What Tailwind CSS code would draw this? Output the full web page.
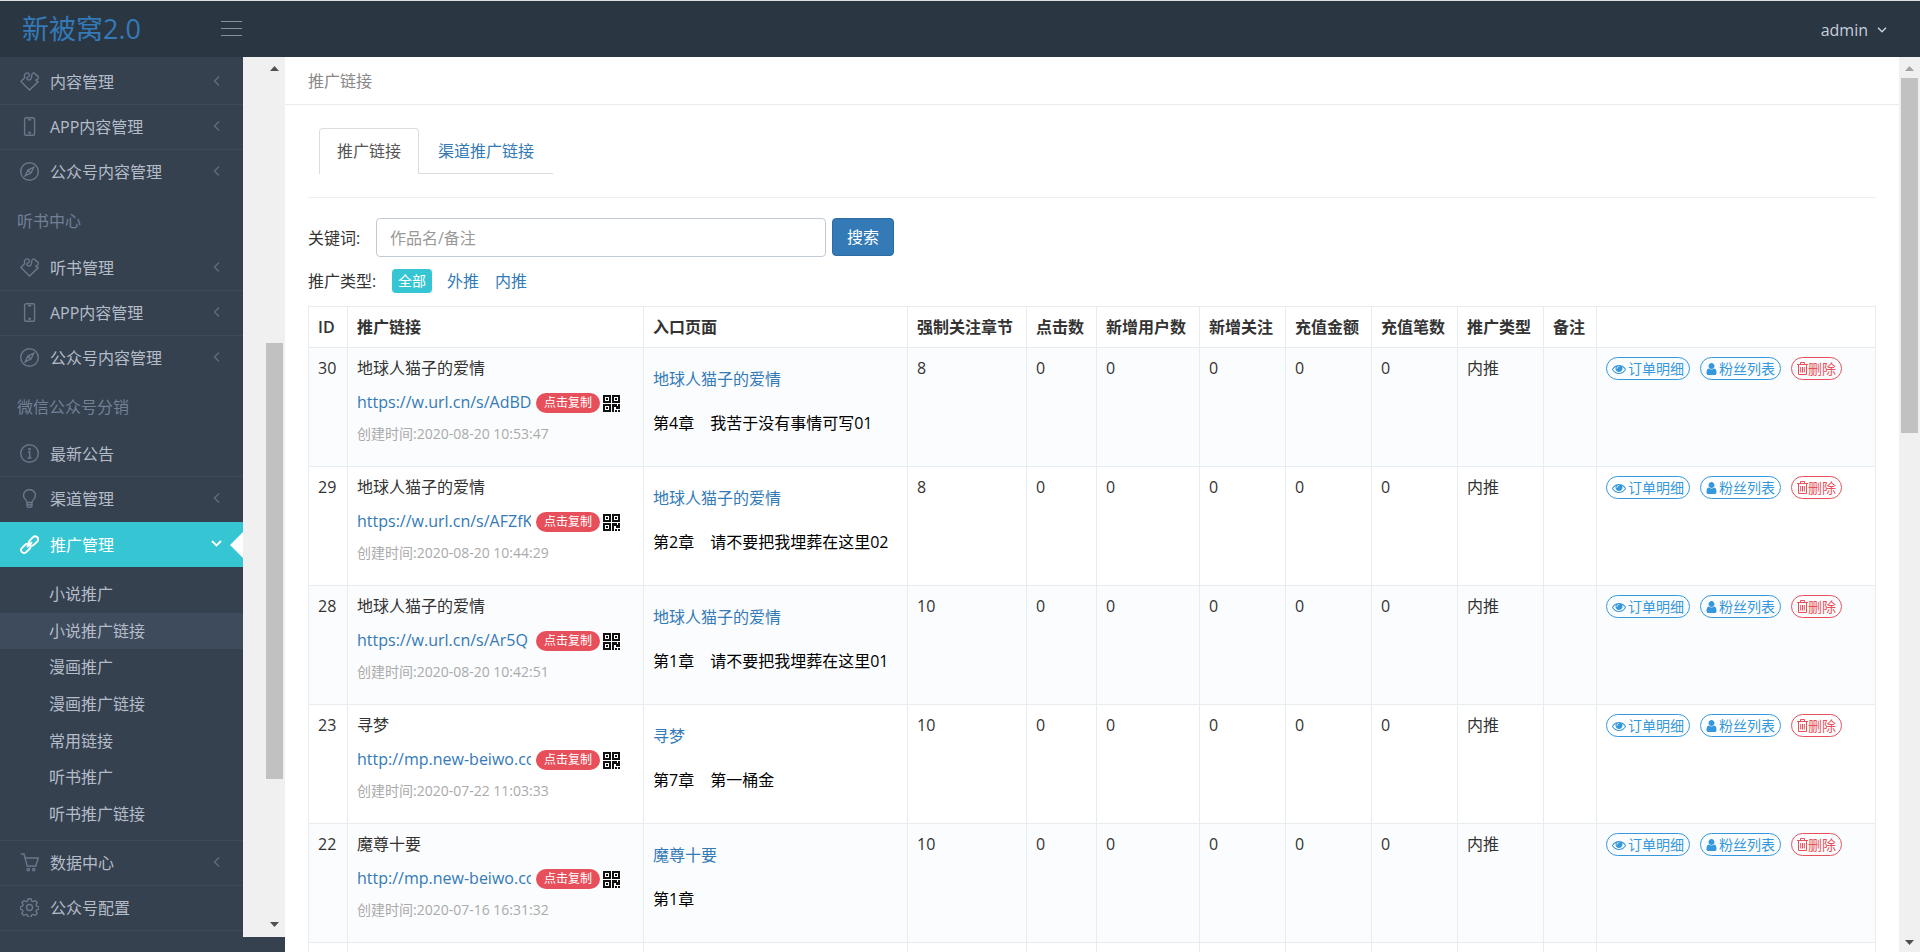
<!DOCTYPE html>
<html lang="zh-CN">
<head>
<meta charset="utf-8">
<title>新被窝2.0</title>
<script src="https://cdn.jsdelivr.net/npm/@tailwindcss/browser@4"></script>
</head>
<body class="flex h-screen flex-col overflow-hidden bg-[#364150] font-['Open_Sans','Noto_Sans_CJK_SC',sans-serif] text-base leading-6 text-[#333]">

<svg class="hidden" xmlns="http://www.w3.org/2000/svg">
  <symbol id="puzzle" viewBox="0 0 19 19"><path d="M.9 9.500 4.800 5.600C4 3.500 4.800 1.200 6.800.9C8.600.7 9.800 2 9.300 3.800C8.900 5 6.800 4.800 6.900 6.300C7.100 8 9.300 8.600 10.600 7.400C12 6.200 11.600 5 11.800 3C12 1 14 .4 15.100 1.600C15.600 2.200 15.500 3 16 3.300C18 3.100 18.700 5.200 17.900 6.800C17.300 7.800 15.900 7.600 15.700 8.300L18.100 9.800 9.500 18.100Z"/></symbol>
  <symbol id="phone" viewBox="0 0 19 19"><rect x="4.600" y=".7" width="10" height="17.500" rx="1.500"/><path d="M8 2.700h3.200M9 15.500h1.200v.6H9z"/></symbol>
  <symbol id="compass" viewBox="0 0 19 19"><circle cx="9.500" cy="9.500" r="8.800"/><path d="M13.800 5.200 11 11 5.200 13.800 8 8Zm-5.800 2.800 3 3M9.500 9.500h.1"/></symbol>
  <symbol id="info" viewBox="0 0 19 19"><circle cx="9.500" cy="9.500" r="8.800"/><path d="M9 4.700h1v.8H9zM8 8h1.700v6M7.500 14h4"/></symbol>
  <symbol id="bulb" viewBox="0 0 19 19"><path d="M7 13.500C7 11 3.500 10 3.500 6.500a6 6 0 0 1 12 0C15.500 10 12 11 12 13.500ZM7 13.500v3q0 1.800 1.800 1.800h1.400q1.800 0 1.800-1.800v-3M7 15.700h5"/></symbol>
  <symbol id="link" viewBox="0 0 19 19"><g stroke-width="1.900"><rect x="8.300" y="3" width="10.500" height="6" rx="3" transform="rotate(-45 13.500 6)"/><rect x=".5" y="10.500" width="10.500" height="6" rx="3" transform="rotate(-45 5.700 13.500)"/><path d="m7 12 5-5"/></g></symbol>
  <symbol id="cart" viewBox="0 0 19 19"><path d="M.8 1H4l3.200 12h8.600L18.300 5H5"/><circle cx="8.300" cy="16.600" r="1.200"/><circle cx="13.700" cy="16.600" r="1.200"/></symbol>
  <symbol id="gear" viewBox="0 0 19 19"><circle cx="9.500" cy="9.500" r="3"/><path d="M8 .8h3l.6 2.200 1.500.7 2-1.200 2.100 2.100-1.200 2 .6 1.500 2.200.6v2.600l-2.200.6-.6 1.500 1.200 2-2.100 2.100-2-1.200-1.500.7-.6 2.200H8l-.6-2.200-1.500-.7-2 1.200-2.100-2.100 1.200-2-.6-1.500L.4 11.300V8.700l2.200-.6.6-1.500-1.200-2 2.100-2.100 2 1.200 1.500-.7Z" stroke-linejoin="round"/></symbol>
  <symbol id="eye" viewBox="0 0 1792 1792"><path d="M1664 960q-152-236-381-353 61 104 61 225 0 185-131.5 316.5t-316.5 131.5-316.5-131.5-131.5-316.5q0-121 61-225-229 117-381 353 133 205 333.5 326.5t434.5 121.5 434.5-121.5 333.500-326.500zm-720-384q0-20-14-34t-34-14q-125 0-214.500 89.500t-89.500 214.500q0 20 14 34t34 14 34-14 14-34q0-86 61-147t147-61q20 0 34-14t14-34zm848 384q0 34-20 69-140 230-376.500 368.500t-499.500 138.500-499.500-139-376.500-368q-20-35-20-69t20-69q140-229 376.500-368t499.500-139 499.500 139 376.500 368q20 35 20 69z"/></symbol>
  <symbol id="user" viewBox="256 128 1280 1536"><path d="M1536 1399q0 109-62.500 187t-150.500 78h-854q-88 0-150.500-78t-62.500-187q0-85 8.500-160.500t31.500-152 58.500-131 94-89 134.500-34.500q131 128 313 128t313-128q76 0 134.500 34.500t94 89 58.500 131 31.500 152 8.500 160.500zm-256-887q0 159-112.500 271.500t-271.500 112.500-271.500-112.500-112.500-271.500 112.500-271.500 271.500-112.500 271.500 112.500 112.500 271.500z"/></symbol>
  <symbol id="trash" viewBox="0 0 11 13"><path d="M0 2.500h11M3.500 2.500v-2h4v2M1.500 2.500v10h8v-10M3.700 5v5.500M5.500 5v5.500M7.300 5v5.500"/></symbol>
  <symbol id="qr" viewBox="0 0 17 17"><path fill-rule="evenodd" d="M0 0h8v8H0zM2 2v4h4V2zM9 0h8v8H9zM11 2v4h4V2zM0 9h8v8H0zM2 11v4h4v-4zM3 3h2v2H3zM12 3h2v2h-2zM3 12h2v2H3zM9 9h5v2h1V9h2v5h-4v-2h-2v5H9zM12 15h2v2h-2zM15 15h2v2h-2z"/></symbol>
</svg>

<header class="flex h-[57px] shrink-0 items-center border-t border-[#dcdfe2] bg-[#2b3643] pr-[33px] pl-[22px]">
  <a href="#" class="w-[199px] text-[27px] leading-9 text-[#337ab7]">新被窝2.0</a>
  <button type="button" aria-label="菜单" class="mb-[2px] flex w-[21px] flex-col gap-[6px]">
    <span class="h-px w-full bg-[#8491a1]"></span><span class="h-px w-full bg-[#8491a1]"></span><span class="h-px w-full bg-[#8491a1]"></span>
  </button>
  <button type="button" class="ml-auto flex items-center gap-[9px] pt-[2px] text-[#c6cfda]">admin
    <svg class="h-[6px] w-[10px]" viewBox="0 0 10 6" fill="none" stroke="currentColor" stroke-width="1.500"><path d="m1 .8 4 4 4-4"/></svg>
  </button>
</header>

<div class="flex min-h-0 flex-1">
  <aside class="flex w-[285px] shrink-0 flex-col pb-[15px]">
    <div class="flex min-h-0 flex-1 bg-[#f0f0f0]">
      <nav id="menu" class="w-[243px] shrink-0 bg-[#364150] pt-[3px] text-[#b4bcc8]"></nav>
      <div class="ml-auto flex w-[21px] flex-col items-center pt-[9px] pb-[10px]" aria-hidden="true">
        <svg class="h-[5px] w-[9px]" viewBox="0 0 9 5" fill="#505050"><path d="M0 5 4.500 0 9 5z"/></svg>
        <div class="w-[17px] grow-[272]"></div>
        <div class="w-[17px] grow-[437] bg-[#c1c1c1]"></div>
        <div class="w-[17px] grow-[143]"></div>
        <svg class="h-[5px] w-[9px]" viewBox="0 0 9 5" fill="#505050"><path d="M0 0h9L4.500 5z"/></svg>
      </div>
    </div>
  </aside>

  <main class="min-w-0 flex-1 overflow-hidden bg-white">
    <div class="border-b border-[#e7ecf1] px-[23px] pt-[13px] pb-[11px] leading-[23px] text-[#888]">推广链接</div>
    <div class="px-[23px] pt-[23px]">
      <ul class="ml-[11px] flex w-max border-b border-[#ddd]">
        <li class="-mb-px rounded-t border border-b-0 border-[#ddd] bg-white"><a href="#" class="block px-[17px] pt-[10px] pb-[11px] text-[#555]">推广链接</a></li>
        <li class="pt-px"><a href="#" class="block px-[19px] pt-[10px] pb-[10px] text-[#337ab7]">渠道推广链接</a></li>
      </ul>
      <hr class="mt-[23px] border-[#eee]">
      <form class="mt-5 flex items-start" onsubmit="return false">
        <label for="kw" class="w-[68px] pt-2">关键词:</label>
        <input id="kw" type="text" placeholder="作品名/备注" class="h-[39px] w-[450px] rounded border border-[#c2cad8] px-[13px] placeholder-[#999] outline-none">
        <button type="submit" class="ml-[6px] h-[38px] rounded border border-[#2e6da4] bg-[#337ab7] px-[14px] text-white">搜索</button>
      </form>
      <div class="mt-3 mb-[13px] flex h-6 items-center">
        <span class="w-[84px]">推广类型:</span>
        <a href="#" class="rounded bg-[#36c6d3] px-[6px] text-sm leading-6 text-white">全部</a>
        <a href="#" class="ml-[15px] text-[#337ab7]">外推</a>
        <a href="#" class="ml-4 text-[#337ab7]">内推</a>
      </div>
      <table class="w-full table-fixed border-collapse text-left align-top">
        <colgroup><col class="w-[39px]"><col class="w-[296px]"><col class="w-[264px]"><col class="w-[119px]"><col class="w-[70px]"><col class="w-[103px]"><col class="w-[86px]"><col class="w-[86px]"><col class="w-[86px]"><col class="w-[86px]"><col class="w-[53px]"><col></colgroup>
        <thead><tr id="head"></tr></thead>
        <tbody id="rows"></tbody>
      </table>
    </div>
  </main>

  <div class="flex w-[21px] shrink-0 flex-col items-center bg-[#f0f0f0] pt-[9px] pb-[7px]" aria-hidden="true">
    <svg class="h-[5px] w-[9px]" viewBox="0 0 9 5" fill="#a3a3a3"><path d="M0 5 4.500 0 9 5z"/></svg>
    <div class="w-[17px] grow-[7]"></div>
    <div class="w-[17px] grow-[355] bg-[#c1c1c1]"></div>
    <div class="w-[17px] grow-[507]"></div>
    <svg class="h-[5px] w-[9px]" viewBox="0 0 9 5" fill="#505050"><path d="M0 0h9L4.500 5z"/></svg>
  </div>
</div>

<script>
const item = (icon, label, arrow = true, last = false) => `
  <a href="#" class="flex h-[45px] items-center border-b pr-[23px] pl-5 ${last ? 'border-transparent' : 'border-[#3d4957]'}">
    <svg class="mr-[11px] mb-[2px] h-[19px] w-[19px] text-[#6a778a]" fill="none" stroke="currentColor" stroke-width="1.400"><use href="#${icon}"/></svg>${label}
    ${arrow ? '<svg class="mb-[3px] ml-auto h-[10px] w-[7px] text-[#606c7d]" viewBox="0 0 7 10" fill="none" stroke="currentColor" stroke-width="1.400"><path d="M6 .5 1.500 5 6 9.500"/></svg>' : ''}
  </a>`;
const heading = t => `<h3 class="pt-[14px] pb-3 pl-[17px] leading-[25px] text-[#708096]">${t}</h3>`;
const subs = ['小说推广', '小说推广链接', '漫画推广', '漫画推广链接', '常用链接', '听书推广', '听书推广链接'];
document.getElementById('menu').innerHTML =
  item('puzzle', '内容管理') + item('phone', 'APP内容管理') + item('compass', '公众号内容管理', true, true) +
  heading('听书中心') +
  item('puzzle', '听书管理') + item('phone', 'APP内容管理') + item('compass', '公众号内容管理', true, true) +
  heading('微信公众号分销') +
  item('info', '最新公告', false) + item('bulb', '渠道管理', true, true) +
  `<a href="#" class="flex h-[45px] items-center bg-[#36c6d3] pl-5 text-white">
    <svg class="mr-[11px] h-[19px] w-[19px]" fill="none" stroke="currentColor"><use href="#link"/></svg>推广管理
    <svg class="mb-[3px] mr-[8px] ml-auto h-[7px] w-[11px]" viewBox="0 0 11 7" fill="none" stroke="currentColor" stroke-width="1.800"><path d="m1 1 4.500 4.500L10 1"/></svg>
    <svg class="h-[26px] w-[13px]" viewBox="0 0 13 26" fill="white"><path d="M13 0v26L0 13z"/></svg>
  </a>
  <ul class="grid h-[274px] grid-rows-7 border-b border-[#3d4957] pt-[9px] pb-2">` +
  subs.map((s, i) => `<li class="flex items-center pl-[49px] ${i === 1 ? 'bg-[#3e4b5c]' : ''}"><a href="#">${s}</a></li>`).join('') + '</ul>' +
  item('cart', '数据中心') + item('gear', '公众号配置', false);

document.getElementById('head').innerHTML = ['ID', '推广链接', '入口页面', '强制关注章节', '点击数', '新增用户数', '新增关注', '充值金额', '充值笔数', '推广类型', '备注', '']
  .map(t => `<th class="border border-[#e7ecf1] px-[9px] py-2 font-semibold whitespace-nowrap">${t}</th>`).join('');

const td = (html) => `<td class="border border-[#e7ecf1] px-[9px] py-2 align-top">${html}</td>`;
const pill = (color, icon, label) => `<button type="button" class="flex h-[23px] items-center gap-[2px] rounded-full border px-[5px] text-sm ${color}">${icon}${label}</button>`;
const eye = '<svg class="h-[14px] w-[14px]" fill="currentColor"><use href="#eye"/></svg>';
const user = '<svg class="h-[12px] w-[11px]" fill="currentColor"><use href="#user"/></svg>';
const trash = '<svg class="-mr-[2px] h-[13px] w-[11px]" fill="none" stroke="currentColor"><use href="#trash"/></svg>';
const data = [
  [30, '地球人猫子的爱情', 'https://w.url.cn/s/AdBD', '2020-08-20 10:53:47', '第4章　我苦于没有事情可写01', 8],
  [29, '地球人猫子的爱情', 'https://w.url.cn/s/AFZfK', '2020-08-20 10:44:29', '第2章　请不要把我埋葬在这里02', 8],
  [28, '地球人猫子的爱情', 'https://w.url.cn/s/Ar5Q', '2020-08-20 10:42:51', '第1章　请不要把我埋葬在这里01', 10],
  [23, '寻梦', 'http://mp.new-beiwo.co', '2020-07-22 11:03:33', '第7章　第一桶金', 10],
  [22, '魔尊十要', 'http://mp.new-beiwo.co', '2020-07-16 16:31:32', '第1章', 10],
];
document.getElementById('rows').innerHTML = data.map(([id, name, url, time, chapter, n]) => `
  <tr class="h-[119px] odd:bg-[#fbfcfd]">
    ${td(id)}
    ${td(`<div>${name}</div>
      <div class="mt-[10px] flex items-center">
        <a href="#" class="w-[174px] overflow-hidden whitespace-nowrap text-[#337ab7]">${url}</a>
        <button type="button" class="mt-[2px] ml-[5px] h-5 rounded-full bg-[#e7505a] px-[8px] text-xs leading-5 text-white">点击复制</button>
        <svg class="mt-[2px] ml-[3px] h-[17px] w-[17px]" fill="#111"><use href="#qr"/></svg>
      </div>
      <div class="mt-2 text-sm leading-6 text-[#aaa]">创建时间:${time}</div>`)}
    ${td(`<a href="#" class="mt-[11px] block text-[#337ab7]">${name}</a><p class="mt-5 whitespace-nowrap text-black">${chapter}</p>`)}
    ${td(n)}${td(0)}${td(0)}${td(0)}${td(0)}${td(0)}${td('内推')}${td('')}
    ${td(`<div class="flex gap-[10px] pt-px">${pill('border-[#3598dc] text-[#3598dc]', eye, '订单明细')}${pill('border-[#3598dc] text-[#3598dc]', user, '粉丝列表')}${pill('border-[#e7505a] text-[#e7505a]', trash, '删除')}</div>`)}
  </tr>`).join('') + '<tr class="h-[119px] odd:bg-[#fbfcfd]">' + td('').repeat(12) + '</tr>';
</script>
</body>
</html>
